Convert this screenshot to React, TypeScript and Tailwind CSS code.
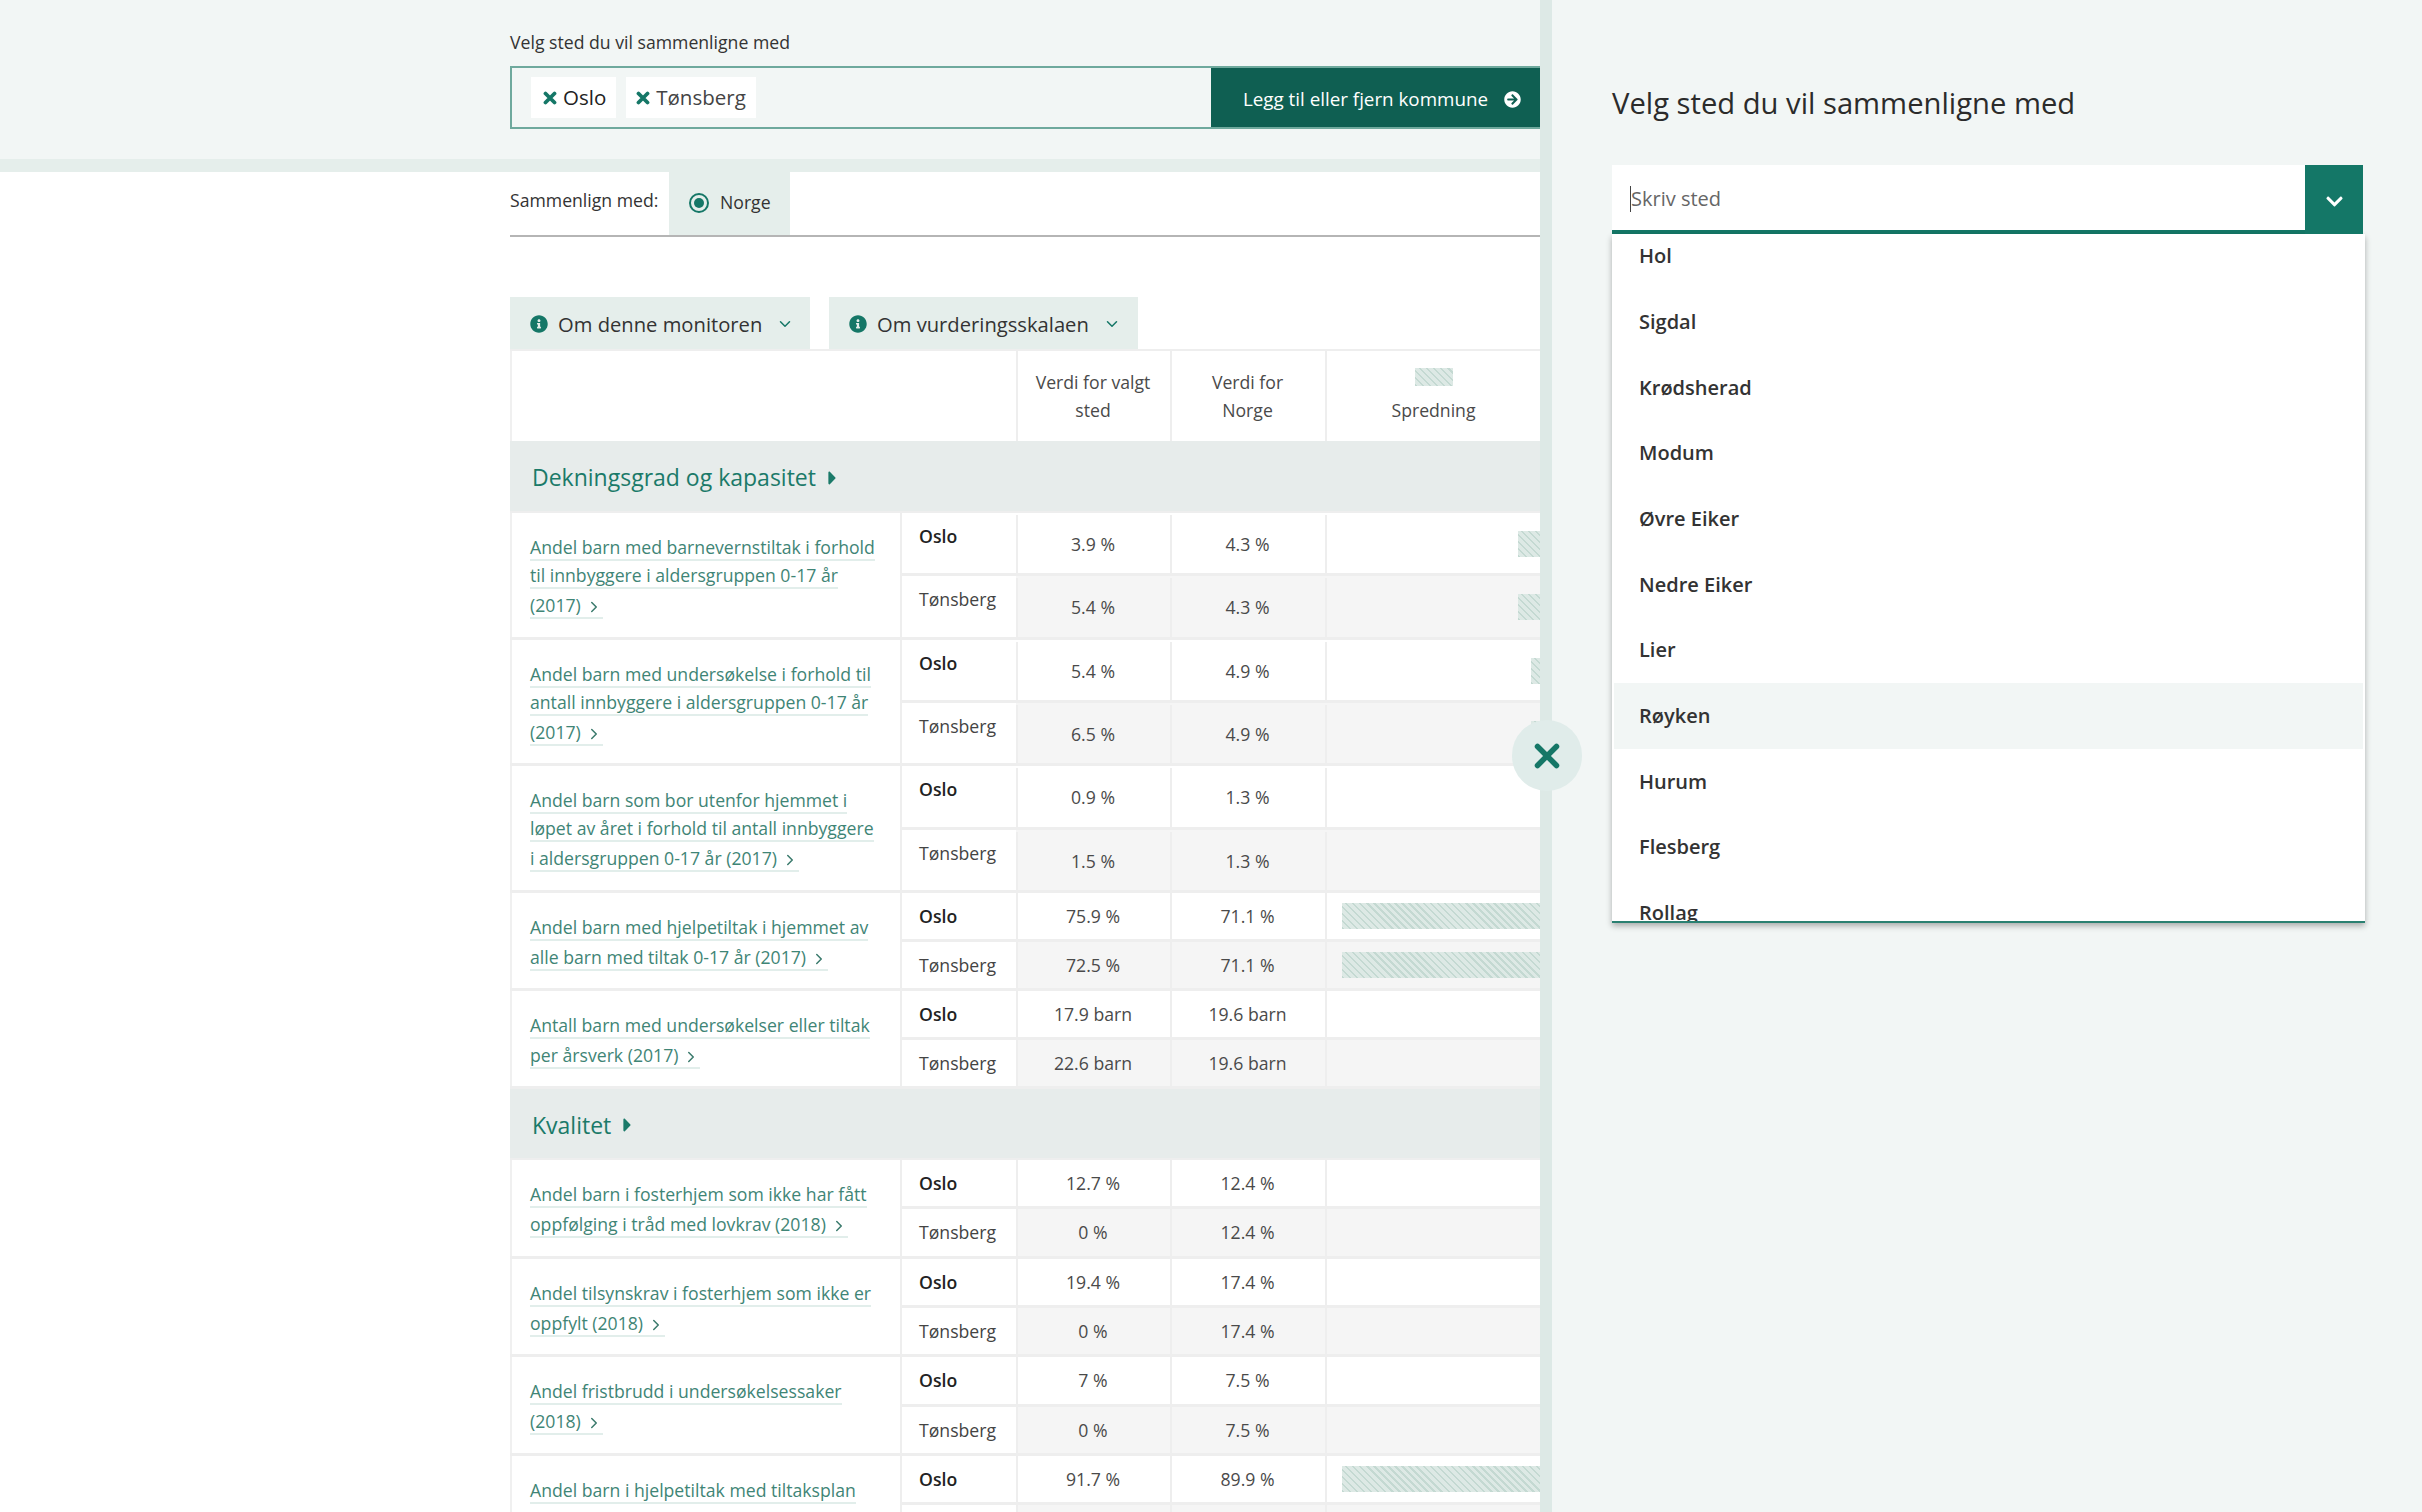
import { ChevronDown, ChevronRight } from 'lucide-react';
import React from 'react';
import { FaArrowCircleRight, FaCaretRight, FaChevronDown, FaInfoCircle } from 'react-icons/fa';

type Row = { place: string; value: string; norway: string; bar?: string };
type Group = { lines: string[]; rows: Row[]; tall?: boolean };

const hatch =
  'bg-[repeating-linear-gradient(45deg,#c4d9d2_0,#c4d9d2_1.8px,#dde9e5_1.8px,#dde9e5_5px)]';

const coverage: Group[] = [
  {
    tall: true,
    lines: ['Andel barn med barnevernstiltak i forhold', 'til innbyggere i aldersgruppen 0-17 år', '(2017)'],
    rows: [
      { place: 'Oslo', value: '3.9 %', norway: '4.3 %', bar: 'w-[22px]' },
      { place: 'Tønsberg', value: '5.4 %', norway: '4.3 %', bar: 'w-[22px]' },
    ],
  },
  {
    tall: true,
    lines: ['Andel barn med undersøkelse i forhold til', 'antall innbyggere i aldersgruppen 0-17 år', '(2017)'],
    rows: [
      { place: 'Oslo', value: '5.4 %', norway: '4.9 %', bar: 'w-[9px]' },
      { place: 'Tønsberg', value: '6.5 %', norway: '4.9 %', bar: 'w-[9px]' },
    ],
  },
  {
    tall: true,
    lines: ['Andel barn som bor utenfor hjemmet i', 'løpet av året i forhold til antall innbyggere', 'i aldersgruppen 0-17 år (2017)'],
    rows: [
      { place: 'Oslo', value: '0.9 %', norway: '1.3 %' },
      { place: 'Tønsberg', value: '1.5 %', norway: '1.3 %' },
    ],
  },
  {
    lines: ['Andel barn med hjelpetiltak i hjemmet av', 'alle barn med tiltak 0-17 år (2017)'],
    rows: [
      { place: 'Oslo', value: '75.9 %', norway: '71.1 %', bar: 'w-[198px]' },
      { place: 'Tønsberg', value: '72.5 %', norway: '71.1 %', bar: 'w-[198px]' },
    ],
  },
  {
    lines: ['Antall barn med undersøkelser eller tiltak', 'per årsverk (2017)'],
    rows: [
      { place: 'Oslo', value: '17.9 barn', norway: '19.6 barn' },
      { place: 'Tønsberg', value: '22.6 barn', norway: '19.6 barn' },
    ],
  },
];

const quality: Group[] = [
  {
    lines: ['Andel barn i fosterhjem som ikke har fått', 'oppfølging i tråd med lovkrav (2018)'],
    rows: [
      { place: 'Oslo', value: '12.7 %', norway: '12.4 %' },
      { place: 'Tønsberg', value: '0 %', norway: '12.4 %' },
    ],
  },
  {
    lines: ['Andel tilsynskrav i fosterhjem som ikke er', 'oppfylt (2018)'],
    rows: [
      { place: 'Oslo', value: '19.4 %', norway: '17.4 %' },
      { place: 'Tønsberg', value: '0 %', norway: '17.4 %' },
    ],
  },
  {
    lines: ['Andel fristbrudd i undersøkelsessaker', '(2018)'],
    rows: [
      { place: 'Oslo', value: '7 %', norway: '7.5 %' },
      { place: 'Tønsberg', value: '0 %', norway: '7.5 %' },
    ],
  },
  {
    // second row falls below the fold
    lines: ['Andel barn i hjelpetiltak med tiltaksplan', ''],
    rows: [
      { place: 'Oslo', value: '91.7 %', norway: '89.9 %', bar: 'w-[198px]' },
      { place: '', value: '', norway: '' },
    ],
  },
];

const places = ['Hol', 'Sigdal', 'Krødsherad', 'Modum', 'Øvre Eiker', 'Nedre Eiker', 'Lier', 'Røyken', 'Hurum', 'Flesberg', 'Rollag'];

const ChipX = () => (
  <svg viewBox="0 0 14 14" className="h-[14px] w-[14px] text-[#157767]" fill="none" stroke="currentColor" strokeWidth="3.8" strokeLinecap="round">
    <path d="M2.5 2.5L11.5 11.5M11.5 2.5L2.5 11.5" />
  </svg>
);

const SectionHeader = ({ title, className }: { title: string; className: string }) => (
  <div className={`flex items-center gap-[10px] border-b-2 border-[#eeeeee] bg-[#e7ecEB] pl-[22px] pt-[3px] text-[23px] text-[#1b7a69] ${className}`}>
    <span>{title}</span>
    <FaCaretRight className="h-[22px] w-[13px]" />
  </div>
);

const MetricGroup = ({ group, height }: { group: Group; height: string }) => (
  <div className={`flex border-b-[3px] border-[#eeeeee] ${height}`}>
    <div className="w-[390px] shrink-0 border-l-2 border-[#f0f0f0] pl-[18px] pt-[20px] text-[17.65px] leading-[28px] text-[#3f8576]">
      {group.lines.map((line, i) => (
        <React.Fragment key={line}>
          <span className="border-b-2 border-[#e2eeeb]">
            {line}
            {i === group.lines.length - 1 && (
              <ChevronRight className="ml-[4px] inline-block h-[36px] w-[18px] align-[-13px] text-[#3a7a6c]" strokeWidth={2} />
            )}
          </span>
          {i < group.lines.length - 1 && <br />}
        </React.Fragment>
      ))}
    </div>
    <div className="flex min-w-0 flex-1 flex-col">
      {group.rows.map((row, i) => (
        <div key={row.place} className={`flex flex-1 ${i === 1 ? 'border-t-[3px] border-[#eeeeee]' : ''}`}>
          <div className={`w-[116px] shrink-0 border-l-2 border-[#eeeeee] bg-white pl-[17px] pt-[9px] text-[17.65px] leading-[28px] ${i === 0 ? 'font-semibold text-[#222222]' : 'text-[#444444]'}`}>
            {row.place}
          </div>
          <div className={`flex flex-1 text-[17.65px] text-[#4a4a4a] ${i === 1 ? 'bg-[#f5f5f5]' : 'bg-white'} ${group.tall ? 'pt-[2px]' : ''}`}>
            <div className="flex w-[154px] shrink-0 items-center justify-center border-l-2 border-[#eeeeee] pr-[2px]">{row.value}</div>
            <div className="flex w-[155px] shrink-0 items-center justify-center border-l-2 border-[#eeeeee] pr-[2px]">{row.norway}</div>
            <div className="flex flex-1 items-center justify-end border-l-2 border-[#eeeeee]">
              {row.bar && <div className={`h-[26px] ${row.bar} ${hatch}`} />}
            </div>
          </div>
        </div>
      ))}
    </div>
  </div>
);

export default function App() {
  return (
    <div className="relative flex h-[1512px] overflow-hidden bg-[#f2f6f5] font-['Open_Sans',sans-serif] text-[#333333]">
      {/* Monitor */}
      <div className="w-[1540px] shrink-0 bg-white">
        <div className="h-[159px] bg-[#f2f6f5] pl-[510px] pt-[29px]">
          <div className="text-[17.65px] leading-[26px] text-[#333333]">Velg sted du vil sammenligne med</div>
          <div className="mt-[11px] flex h-[63px] border-2 border-r-0 border-[#6fa99d]">
            <div className="flex flex-1 items-center gap-[10px] pl-[19px]">
              <div className="flex h-[41px] items-center gap-[6px] bg-white pl-[12px] pr-[10px] text-[20.5px] text-[#222222]">
                <ChipX />
                Oslo
              </div>
              <div className="flex h-[41px] items-center gap-[6px] bg-white pl-[10px] pr-[10px] text-[20.5px] text-[#444444]">
                <ChipX />
                Tønsberg
              </div>
            </div>
            <div className="flex w-[329px] items-center gap-[16px] bg-[#0f5f52] pl-[32px] pt-[3px] text-[18.8px] text-white">
              Legg til eller fjern kommune
              <FaArrowCircleRight className="h-[17px] w-[17px]" />
            </div>
          </div>
        </div>
        <div className="h-[13px] bg-[#e5eeeb]" />

        <div className="pl-[510px]">
          <div className="flex h-[65px] items-stretch border-b-2 border-[#b5b5b5] text-[17.65px]">
            <div className="w-[159px] pt-[14px] leading-[28px]">Sammenlign med:</div>
            <div className="flex w-[121px] items-center gap-[11px] bg-[#e5eeeb] pb-[2px] pl-[20px]">
              <div className="flex h-[20px] w-[20px] items-center justify-center rounded-full border-2 border-[#157767]">
                <div className="h-[10px] w-[10px] rounded-full bg-[#157767]" />
              </div>
              Norge
            </div>
          </div>

          <div className="mt-[60px] flex h-[52px] gap-[19px] text-[20.2px]">
            <div className="flex w-[300px] items-center bg-[#e5eeeb] pl-[20px] pt-[2px]">
              <FaInfoCircle className="h-[18px] w-[18px] text-[#157767]" />
              <span className="ml-[10px]">Om denne monitoren</span>
              <ChevronDown className="ml-[14px] h-[18px] w-[18px] text-[#157767]" />
            </div>
            <div className="flex w-[309px] items-center bg-[#e5eeeb] pl-[20px] pt-[2px]">
              <FaInfoCircle className="h-[18px] w-[18px] text-[#157767]" />
              <span className="ml-[10px]">Om vurderingsskalaen</span>
              <ChevronDown className="ml-[14px] h-[18px] w-[18px] text-[#157767]" />
            </div>
          </div>

          <div className="flex h-[92px] border-t-2 border-[#eeeeee] text-center text-[17.65px] leading-[28px] text-[#4a4a4a]">
            <div className="w-[506px] shrink-0 border-l-2 border-[#f0f0f0]" />
            <div className="w-[154px] shrink-0 border-l-2 border-[#eeeeee] pr-[2px] pt-[17px]">
              Verdi for valgt
              <br />
              sted
            </div>
            <div className="w-[155px] shrink-0 border-l-2 border-[#eeeeee] pr-[2px] pt-[17px]">
              Verdi for
              <br />
              Norge
            </div>
            <div className="flex flex-1 flex-col items-center border-l-2 border-[#eeeeee] pt-[17px]">
              <div className={`h-[18px] w-[38px] ${hatch}`} />
              <div className="mt-[10px]">Spredning</div>
            </div>
          </div>

          <SectionHeader title="Dekningsgrad og kapasitet" className="h-[72px]" />
          {coverage.map((group) => (
            <MetricGroup key={group.lines[0]} group={group} height={group.tall ? 'h-[126.67px]' : 'h-[98px]'} />
          ))}
          <SectionHeader title="Kvalitet" className="h-[71px]" />
          {quality.map((group) => (
            <MetricGroup key={group.lines[0]} group={group} height="h-[98.67px]" />
          ))}
        </div>
      </div>

      <div className="w-[12px] shrink-0 bg-[#dde9e6]" />

      {/* Place picker */}
      <div className="min-w-0 flex-1 pl-[60px] pt-[79px]">
        <h2 className="text-[29.2px] leading-[48px] text-[#2b2b2b]">Velg sted du vil sammenligne med</h2>
        <div className="mt-[38px] w-[751px]">
          <div className="flex h-[69px] border-b-4 border-[#147767] bg-white">
            <div className="flex flex-1 items-center pl-[18px] pt-[2px] text-[20px] text-[#666666]">
              <span className="border-l border-[#444444] leading-[26px]">Skriv sted</span>
            </div>
            <div className="-mb-[4px] flex w-[58px] items-center justify-center bg-[#147767] pt-[3px] text-white">
              <FaChevronDown className="h-[19px] w-[19px]" />
            </div>
          </div>
          <div className="-mr-[2px] h-[689px] overflow-hidden border-b-2 border-[#2a8071] bg-white shadow-[0_3px_6px_rgba(0,0,0,0.3)]">
            <div className="-mt-[10.5px]">
              {places.map((place) => (
                <div
                  key={place}
                  className={`flex h-[65.67px] items-center pl-[27px] text-[20px] font-semibold text-[#333333] ${place === 'Røyken' ? 'mx-[2px] bg-[#f2f6f5] !pl-[25px]' : ''}`}
                >
                  {place}
                </div>
              ))}
            </div>
          </div>
        </div>
      </div>

      <div className="absolute left-[1512px] top-[720px] flex h-[71px] w-[70px] items-center justify-center rounded-full bg-[#e0ecea] text-[#157767]">
        <svg viewBox="0 0 26 26" className="h-[26px] w-[26px]" fill="none" stroke="currentColor" strokeWidth="5.5" strokeLinecap="round">
          <path d="M3.5 3.5L22.5 22.5M22.5 3.5L3.5 22.5" />
        </svg>
      </div>
    </div>
  );
}
